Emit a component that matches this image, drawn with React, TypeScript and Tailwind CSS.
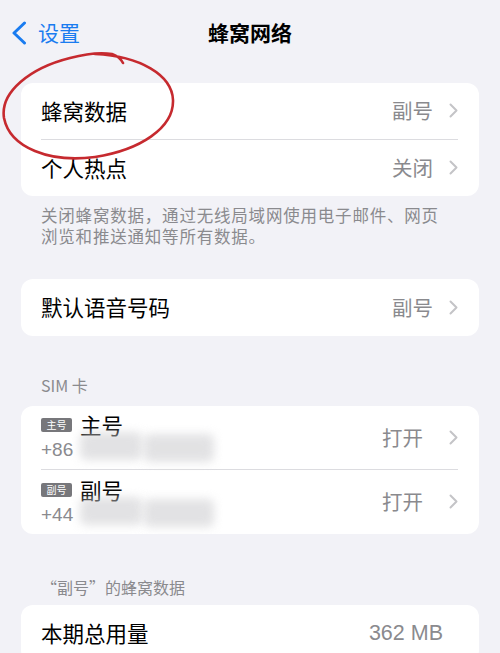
const font = { fontFamily: '"Noto Sans CJK SC", "Liberation Sans", sans-serif' };
const latin = { fontFamily: '"Liberation Sans", sans-serif' };

function Chevron() {
  return (
    <svg className="ml-[16px] shrink-0" width="9" height="15" viewBox="0 0 9 15">
      <path d="M1.5 1.5 L7.5 7.5 L1.5 13.5" fill="none" stroke="#c4c4c7" strokeWidth="2" strokeLinecap="round" strokeLinejoin="round" />
    </svg>
  );
}

function Row({ title, value, divider }: { title: string; value: string; divider?: boolean }) {
  return (
    <div className="flex h-[56.5px] items-center pl-[20px] pr-[21px]">
      <div className={`flex h-full flex-1 items-center ${divider ? "border-b border-[#dcdce0]" : ""}`}>
        <span className="flex-1 text-[21.5px] text-black">{title}</span>
        <span className="text-[20.5px] text-[#8a8a8e]">{value}</span>
        <Chevron />
      </div>
    </div>
  );
}

function SimRow({
  badge,
  name,
  prefix,
  divider,
}: {
  badge: string;
  name: string;
  prefix: string;
  divider?: boolean;
}) {
  return (
    <div className="flex h-[64px] pl-[20px] pr-[21px]">
      <div className={`flex h-full flex-1 items-center ${divider ? "border-b border-[#dcdce0]" : ""}`}>
        <div className="flex flex-1 flex-col">
          <div className="flex items-center gap-[8px] leading-[26px]">
            <span className="flex h-[14px] w-[31px] items-center justify-center rounded-[2px] bg-[#77777b] text-[10px] leading-none text-white">
              {badge}
            </span>
            <span className="text-[21.5px] text-black">{name}</span>
          </div>
          <div className="flex items-center leading-[24px]">
            <span className="text-[19px] text-[#8a8a8e]" style={latin}>
              {prefix}
            </span>
            {/* masked phone number */}
            <span className="relative ml-[7px] h-[24px] w-[134px]">
              <span className="absolute left-0 top-[-6px] h-[28px] w-[62px] rounded-md bg-[#cfcfd2] opacity-60 blur-[5px]" />
              <span className="absolute left-[64px] top-[-4px] h-[28px] w-[70px] rounded-md bg-[#cfcfd2] opacity-60 blur-[5px]" />
            </span>
          </div>
        </div>
        <span className="text-[20.5px] text-[#8a8a8e]">打开</span>
        <span className="w-[10px]" />
        <Chevron />
      </div>
    </div>
  );
}

export default function App() {
  return (
    <div className="relative h-[653px] w-[500px] overflow-hidden bg-[#f2f2f7]" style={font}>
      <header className="relative flex h-[66px] items-center">
        <div className="flex items-center gap-[10px] pl-[11px] text-[#1a7cf0]">
          <svg width="17" height="24" viewBox="0 0 17 24">
            <path d="M13.5 2 L3 12 L13.5 22" fill="none" stroke="#1a7cf0" strokeWidth="3" strokeLinecap="round" strokeLinejoin="round" />
          </svg>
          <span className="text-[21px]">设置</span>
        </div>
        <h1 className="absolute left-0 right-0 text-center text-[21px] font-bold text-black">蜂窝网络</h1>
      </header>

      <section className="mx-[21px] mt-[17px] overflow-hidden rounded-[12px] bg-white">
        <Row title="蜂窝数据" value="副号" divider />
        <Row title="个人热点" value="关闭" />
      </section>
      <div className="px-[41px] pt-[9px] text-[16.5px] leading-[21px] tracking-[0.8px] text-[#8a8a8e]">
        <p>关闭蜂窝数据，通过无线局域网使用电子邮件、网页</p>
        <p>浏览和推送通知等所有数据。</p>
      </div>

      <section className="mx-[21px] mt-[32px] overflow-hidden rounded-[12px] bg-white">
        <Row title="默认语音号码" value="副号" />
      </section>

      <p className="px-[41px] pt-[38px] pb-[10px] text-[16px] leading-[22px] text-[#8a8a8e]">SIM 卡</p>
      <section className="mx-[21px] overflow-hidden rounded-[12px] bg-white">
        <SimRow badge="主号" name="主号" prefix="+86" divider />
        <SimRow badge="副号" name="副号" prefix="+44" />
      </section>

      <p className="px-[41px] pt-[42px] pb-[7px] text-[16px] leading-[22px] text-[#8a8a8e]">“副号”的蜂窝数据</p>
      <section className="mx-[21px] overflow-hidden rounded-[12px] bg-white">
        <div className="flex h-[57px] items-center pl-[20px] pr-[36px]">
          <span className="flex-1 text-[21.5px] text-black">本期总用量</span>
          <span className="text-[21.5px] text-[#8a8a8e]" style={latin}>
            362 MB
          </span>
        </div>
      </section>

      {/* hand-drawn red circle around the first row */}
      <svg className="pointer-events-none absolute left-0 top-0" width="200" height="170" viewBox="0 0 200 170">
        <path
          d="M95 54 C140 56 172 75 173 100 C174 128 140 150 95 157 C50 163 10 148 4 118 C0 92 30 68 70 58 C85 54 100 52 112 54 C118 56 121 59 123 63"
          fill="none"
          stroke="#c62a2f"
          strokeWidth="2.6"
          strokeLinecap="round"
        />
      </svg>
    </div>
  );
}
